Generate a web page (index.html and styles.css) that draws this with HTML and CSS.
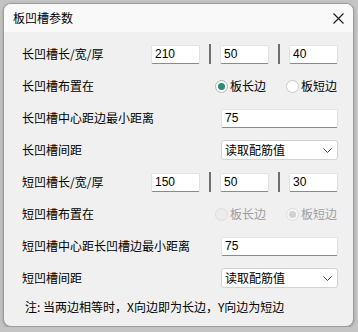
FILE: index.html
```html
<!DOCTYPE html>
<html lang="zh-CN">
<head>
  <meta charset="UTF-8">
  <title>板凹槽参数</title>
  <link rel="stylesheet" href="styles.css">
</head>
<body>
  <div class="dialog">
    <div class="title-bar">
      <span class="title">板凹槽参数</span>
      <svg class="close" width="11" height="11" viewBox="0 0 11 11">
        <path d="M0.5 0.5 L10.5 10.5 M10.5 0.5 L0.5 10.5" stroke="#1a1a1a" stroke-width="1.1" fill="none"/>
      </svg>
    </div>

    <div class="content">
      <div class="row">
        <span class="label">长凹槽长/宽/厚</span>
        <div class="triple">
          <div class="field small">210</div>
          <span class="bar"></span>
          <div class="field small">50</div>
          <span class="bar"></span>
          <div class="field small">40</div>
        </div>
      </div>

      <div class="row">
        <span class="label">长凹槽布置在</span>
        <div class="radios">
          <span class="radio checked"><span class="dot"></span>板长边</span>
          <span class="radio"><span class="dot"></span>板短边</span>
        </div>
      </div>

      <div class="row">
        <span class="label">长凹槽中心距边最小距离</span>
        <div class="field wide">75</div>
      </div>

      <div class="row">
        <span class="label">长凹槽间距</span>
        <div class="select">
          <span>读取配筋值</span>
          <svg width="9" height="5" viewBox="0 0 9 5">
            <path d="M0.5 0.5 L4.5 4.5 L8.5 0.5" stroke="#444" stroke-width="1" fill="none"/>
          </svg>
        </div>
      </div>

      <div class="row">
        <span class="label">短凹槽长/宽/厚</span>
        <div class="triple">
          <div class="field small">150</div>
          <span class="bar"></span>
          <div class="field small">50</div>
          <span class="bar"></span>
          <div class="field small">30</div>
        </div>
      </div>

      <div class="row">
        <span class="label">短凹槽布置在</span>
        <div class="radios disabled">
          <span class="radio"><span class="dot"></span>板长边</span>
          <span class="radio checked"><span class="dot"></span>板短边</span>
        </div>
      </div>

      <div class="row">
        <span class="label">短凹槽中心距长凹槽边最小距离</span>
        <div class="field wide">75</div>
      </div>

      <div class="row">
        <span class="label">短凹槽间距</span>
        <div class="select">
          <span>读取配筋值</span>
          <svg width="9" height="5" viewBox="0 0 9 5">
            <path d="M0.5 0.5 L4.5 4.5 L8.5 0.5" stroke="#444" stroke-width="1" fill="none"/>
          </svg>
        </div>
      </div>

      <div class="note">注: 当两边相等时，X向边即为长边，Y向边为短边</div>
    </div>
  </div>
</body>
</html>
```

FILE: styles.css
```css
body {
  margin: 0;
  background-color: #c4c4c4;
  font-family: "Noto Sans CJK SC", sans-serif;
  font-size: 12px;
  color: #000;
}

.dialog {
  box-sizing: border-box;
  width: 351px;
  height: 324px;
  margin: 3px 0 0 3px;
  background-color: #f0f0f0;
  border: 1px solid #9c9c9c;
  border-radius: 8px;
  overflow: hidden;
  box-shadow: 0 1px 3px rgba(0, 0, 0, 0.25);
}

.title-bar {
  height: 28px;
  background-color: #f9f9f9;
  display: flex;
  align-items: center;
  justify-content: space-between;
  padding: 0 9px 0 9px;
}

.title {
  line-height: 16px;
}

.content {
  padding: 6px 15px 0 18px;
}

.row {
  height: 32px;
  display: flex;
  align-items: center;
  justify-content: space-between;
}

.label {
  line-height: 16px;
}

.triple {
  display: flex;
  align-items: center;
  gap: 9px;
}

.bar {
  width: 2px;
  height: 20px;
  background-color: #6f6f6f;
}

.field {
  box-sizing: border-box;
  height: 19px;
  background-color: #fff;
  border: 1px solid #e2e2e2;
  border-bottom-color: #8a8a8a;
  border-radius: 2px;
  padding-left: 3px;
  font-family: "Liberation Sans", "Noto Sans CJK SC", sans-serif;
  font-size: 12px;
  line-height: 17px;
}

.field.small {
  width: 49px;
}

.field.wide {
  width: 117px;
}

.radios {
  display: flex;
  align-items: center;
  gap: 20px;
  margin-right: 1px;
}

.radio {
  display: flex;
  align-items: center;
  gap: 2px;
  line-height: 16px;
}

.radio .dot {
  box-sizing: border-box;
  width: 13px;
  height: 13px;
  border: 1px solid #c9c9c9;
  border-radius: 50%;
  background-color: #fff;
  position: relative;
}

.radio.checked .dot {
  border-color: #b5b5b5;
}

.radio.checked .dot::after {
  content: "";
  position: absolute;
  left: 2px;
  top: 2px;
  width: 7px;
  height: 7px;
  border-radius: 50%;
  background-color: #2c8a77;
}

.radios.disabled .radio {
  color: #9d9d9d;
}

.radios.disabled .dot {
  background-color: #ececec;
  border-color: #dcdcdc;
}

.radios.disabled .radio.checked .dot {
  background-color: #f6f6f6;
}

.radios.disabled .radio.checked .dot::after {
  background-color: #d2d2d2;
}

.select {
  box-sizing: border-box;
  width: 117px;
  height: 20px;
  background-color: #fff;
  border: 1px solid #d2d2d2;
  border-radius: 3px;
  display: flex;
  align-items: center;
  justify-content: space-between;
  padding: 0 5px 0 3px;
  line-height: 16px;
}

.note {
  height: 26px;
  display: flex;
  align-items: center;
  padding-left: 3px;
  line-height: 16px;
}
```
